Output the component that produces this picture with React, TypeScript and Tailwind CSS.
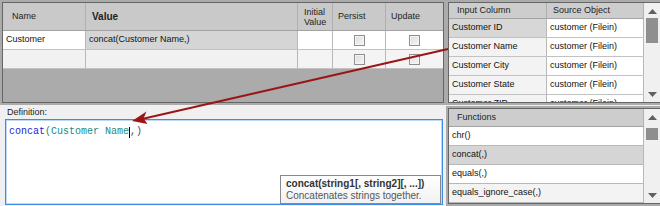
import React from "react";

const ui = "[font-family:'Liberation_Sans',Arial,sans-serif]";

function Check() {
  return (
    <div className="w-[11px] h-[11px] border border-[#8e8f8f] bg-gradient-to-br from-[#dcdcdc] to-[#f7f7f7] shadow-[inset_0_0_0_1px_#f4f4f4]" />
  );
}

function ScrollBar({ thumbTop, thumbH }: { thumbTop: number; thumbH: number }) {
  return (
    <div className="w-[16px] h-full bg-[#f0f0f0] flex flex-col items-center relative">
      <svg width="9" height="5" viewBox="0 0 9 5" className="mt-[6px]">
        <path d="M0 5 L4.5 0 L9 5 Z" fill="#606060" />
      </svg>
      <div className="flex-1 w-full" />
      <svg width="9" height="5" viewBox="0 0 9 5" className="mb-[5px]">
        <path d="M0 0 L4.5 5 L9 0 Z" fill="#606060" />
      </svg>
      <div
        className="absolute left-[2px] w-[12px] bg-[#8f8f8f]"
        style={{ top: thumbTop, height: thumbH }}
      />
    </div>
  );
}

function LeftGrid() {
  const rows = [
    { name: "Customer", value: "concat(Customer Name,)", nameBg: "bg-white", valBg: "bg-[#d5d5d5]", restBg: "bg-white" },
    { name: "", value: "", nameBg: "bg-[#f1f1f1]", valBg: "bg-[#f1f1f1]", restBg: "bg-[#f4f4f4]" },
  ];
  return (
    <div className="w-[446px] h-[105px] border-2 border-[#ababab]">
      <div className="h-full border border-[#666666] bg-[#ababab] flex flex-col overflow-hidden">
        <div className="h-[28px] flex bg-[#c9c9c9] border-b border-[#a3a3a3] text-[9px] text-[#1e1e1e] shrink-0">
          <div className="w-[83px] border-r border-[#b0b0b0] flex items-center pl-[9px]">Name</div>
          <div className="w-[212px] border-r border-[#b0b0b0] flex items-center pl-[6px] font-bold text-[10px]">Value</div>
          <div className="w-[35px] border-r border-[#b0b0b0] flex flex-col justify-center pl-[6px] leading-[10px]">
            <span>Initial</span>
            <span>Value</span>
          </div>
          <div className="w-[53px] border-r border-[#b0b0b0] flex items-center pl-[5px]">Persist</div>
          <div className="w-[57px] flex items-center pl-[5px]">Update</div>
        </div>
        {rows.map((r, i) => (
          <div key={i} className="h-[19px] flex border-b border-[#c2c2c2] text-[9px] text-[#111] shrink-0">
            <div className={`w-[83px] border-r border-[#b8b8b8] flex items-center pl-[3px] ${r.nameBg}`}>{r.name}</div>
            <div className={`w-[212px] border-r border-[#b8b8b8] flex items-center pl-[3px] ${r.valBg}`}>{r.value}</div>
            <div className={`w-[35px] border-r border-[#b8b8b8] ${r.restBg}`} />
            <div className={`w-[53px] border-r border-[#b8b8b8] flex items-center justify-center ${r.restBg}`}>
              <Check />
            </div>
            <div className={`w-[57px] flex items-center justify-center ${r.restBg}`}>
              <Check />
            </div>
          </div>
        ))}
      </div>
    </div>
  );
}

function InputGrid() {
  const rows = [
    ["Customer ID", "customer (Filein)"],
    ["Customer Name", "customer (Filein)"],
    ["Customer City", "customer (Filein)"],
    ["Customer State", "customer (Filein)"],
    ["Customer ZIP", "customer (Filein)"],
  ];
  return (
    <div className="w-[214px] h-[105px] border-2 border-r-0 border-[#ababab]">
      <div className="h-full border border-r-0 border-[#666666] bg-white flex overflow-hidden">
        <div className="w-[195px] flex flex-col">
          <div className="h-[16px] flex bg-[#cdcdcd] border-b border-[#a3a3a3] text-[9px] text-[#1e1e1e] shrink-0">
            <div className="w-[98px] border-r border-[#b0b0b0] flex items-center pl-[8px]">Input Column</div>
            <div className="w-[97px] border-r border-[#b0b0b0] flex items-center pl-[6px]">Source Object</div>
          </div>
          {rows.map((r, i) => (
            <div key={i} className="h-[19px] flex border-b border-[#c2c2c2] text-[9px] text-[#111] shrink-0">
              <div className={`w-[98px] border-r border-[#b8b8b8] flex items-center pl-[3px] ${i === 0 ? "bg-[#d7d7d7]" : "bg-[#f3f3f3]"}`}>
                {r[0]}
              </div>
              <div className="w-[97px] border-r border-[#b8b8b8] flex items-center pl-[3px] bg-white">{r[1]}</div>
            </div>
          ))}
        </div>
        <ScrollBar thumbTop={15} thumbH={25} />
      </div>
    </div>
  );
}

function FunctionsGrid() {
  const rows = [
    { t: "chr()", bg: "bg-white" },
    { t: "concat(,)", bg: "bg-[#d5d5d5]" },
    { t: "equals(,)", bg: "bg-white" },
    { t: "equals_ignore_case(,)", bg: "bg-[#f3f3f3]" },
  ];
  return (
    <div className="w-[214px] h-[100px] mt-[1px] border-2 border-r-0 border-[#ababab]">
      <div className="h-full border border-r-0 border-[#666666] bg-[#ababab] flex overflow-hidden">
        <div className="w-[195px] flex flex-col">
          <div className="h-[18px] flex bg-[#cdcdcd] border-b border-[#a3a3a3] text-[9px] text-[#1e1e1e] shrink-0">
            <div className="w-[195px] border-r border-[#b0b0b0] flex items-center pl-[8px]">Functions</div>
          </div>
          {rows.map((r) => (
            <div key={r.t} className={`h-[19px] flex items-center border-b border-r border-[#b8b8b8] pl-[3px] text-[9px] text-[#111] shrink-0 ${r.bg}`}>
              {r.t}
            </div>
          ))}
        </div>
        <ScrollBar thumbTop={19} thumbH={12} />
      </div>
    </div>
  );
}

export default function App() {
  return (
    <div className={`w-[660px] h-[206px] bg-[#f0f0f0] relative overflow-hidden ${ui}`}>
      <div className="flex h-[105px]">
        <LeftGrid />
        <InputGrid />
      </div>
      <div className="flex h-[101px]">
        <div className="w-[446px] flex flex-col pl-[5px] pr-[3px]">
          <div className="h-[14px] pl-[2px] pt-[2px] text-[9px] text-[#222] leading-[11px]">Definition:</div>
          <div className="h-[86px] border border-[#3a8fe2] shadow-[inset_0_0_0_1px_#b9d9f7] bg-white px-[3px] pt-[6px]">
            <div className="[font-family:'Liberation_Mono',monospace] text-[10px] leading-[12px] flex items-center">
              <span className="text-[#2222e0]">concat</span>
              <span className="text-[#178a86]">(Customer Name</span>
              <span className="w-px h-[11px] bg-black" />
              <span className="text-[#4a4a4a]">,)</span>
            </div>
          </div>
        </div>
        <FunctionsGrid />
      </div>

      <div className="absolute left-[280px] top-[175px] w-[161px] h-[29px] border border-[#8a8a8a] bg-gradient-to-b from-white to-[#f1f1f3] px-[5px] pt-[2px] text-[10px] leading-[12px]">
        <div className="font-bold text-[#333]">concat(string1[, string2][, ...])</div>
        <div className="text-[#575757]">Concatenates strings together.</div>
      </div>

      <svg className="absolute inset-0 pointer-events-none" width="660" height="206" viewBox="0 0 660 206">
        <line x1="448" y1="49" x2="142" y2="119" stroke="#9a1616" strokeWidth="2" />
        <path d="M132 121 L146.5 111.5 L143.5 118.5 L147.5 124 Z" fill="#9a1616" />
      </svg>
    </div>
  );
}
